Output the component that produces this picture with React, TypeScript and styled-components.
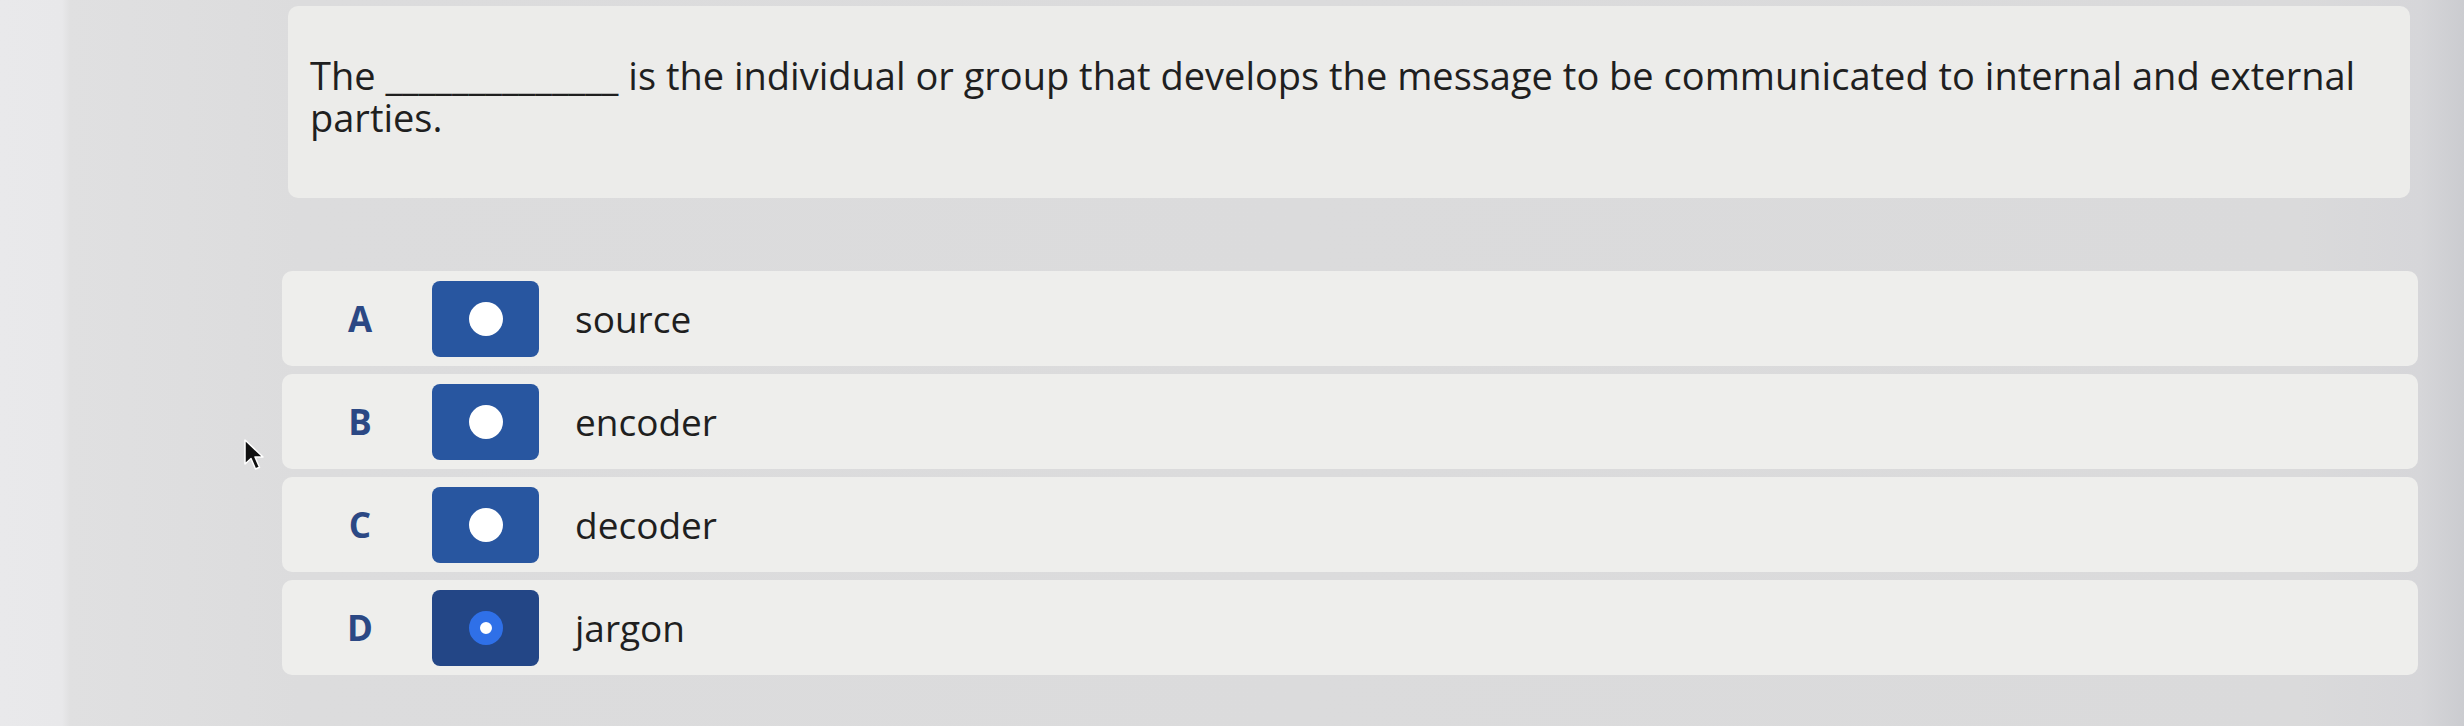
import React from "react";
import styled, { createGlobalStyle } from "styled-components";

const GlobalStyle = createGlobalStyle`
  html, body {
    margin: 0;
    padding: 0;
  }
  body {
    font-family: "Open Sans", "Liberation Sans", sans-serif;
    background: #dcdcdd;
  }
`;

const Page = styled.div`
  position: relative;
  display: flex;
  width: 2464px;
  height: 726px;
  overflow: hidden;
  background: linear-gradient(
    90deg,
    #e9e9eb 0px,
    #e8e8ea 62px,
    #e0e0e1 70px,
    #dcdcdd 300px,
    #dadadb 2300px,
    #d6d6d9 2420px,
    #cbccd0 2464px
  );
`;

const Content = styled.main`
  flex: 1;
  display: flex;
  flex-direction: column;
  padding: 6px 46px 0 282px;
`;

const QuestionCard = styled.section`
  margin-left: 6px;
  margin-right: 8px;
  height: 192px;
  box-sizing: border-box;
  padding: 48px 30px 0 22px;
  border-radius: 10px;
  background: #ececea;
`;

const QuestionText = styled.p`
  margin: 0;
  font-size: 38px;
  line-height: 42px;
  color: #1f1f1f;
`;

const Options = styled.div`
  display: flex;
  flex-direction: column;
  gap: 8px;
  margin-top: 73px;
`;

const OptionRow = styled.label`
  display: flex;
  align-items: center;
  height: 95px;
  box-sizing: border-box;
  padding-left: 64px;
  border-radius: 10px;
  background: #eeeeec;
  cursor: pointer;
`;

const Letter = styled.span`
  width: 28px;
  margin-right: 58px;
  font-size: 35px;
  font-weight: 700;
  color: #2b4884;
  text-align: center;
`;

const RadioBox = styled.span<{ $selected?: boolean }>`
  display: flex;
  align-items: center;
  justify-content: center;
  width: 107px;
  height: 76px;
  margin-right: 36px;
  border-radius: 8px;
  background: ${(p) => (p.$selected ? "#234686" : "#2856a0")};
`;

const Dot = styled.span<{ $selected?: boolean }>`
  box-sizing: border-box;
  width: 34px;
  height: 34px;
  border-radius: 50%;
  background: #ffffff;
  border: ${(p) => (p.$selected ? "11px solid #2f70e8" : "none")};
`;

const OptionText = styled.span`
  font-size: 37px;
  color: #1f1f1f;
`;

const Cursor = styled.svg`
  position: absolute;
  left: 243px;
  top: 439px;
  width: 22px;
  height: 34px;
`;

const options = [
  { letter: "A", text: "source" },
  { letter: "B", text: "encoder" },
  { letter: "C", text: "decoder" },
  { letter: "D", text: "jargon", selected: true },
];

export default function App() {
  return (
    <>
      <GlobalStyle />
      <Page>
        <Content>
          <QuestionCard>
            <QuestionText>
              {"The ______________ is the individual or group that develops the message to be communicated to internal and external parties."}
            </QuestionText>
          </QuestionCard>
          <Options>
            {options.map((o) => (
              <OptionRow key={o.letter}>
                <Letter>{o.letter}</Letter>
                <RadioBox $selected={o.selected}>
                  <Dot $selected={o.selected} />
                </RadioBox>
                <OptionText>{o.text}</OptionText>
              </OptionRow>
            ))}
          </Options>
        </Content>
        <Cursor viewBox="0 0 22 34">
          <path
            d="M2 1 L2 25 L8 19.5 L12.5 30 L16.5 28.3 L12 18 L20 18 Z"
            fill="#111"
            stroke="#fff"
            strokeWidth="1.5"
            strokeLinejoin="round"
          />
        </Cursor>
      </Page>
    </>
  );
}
